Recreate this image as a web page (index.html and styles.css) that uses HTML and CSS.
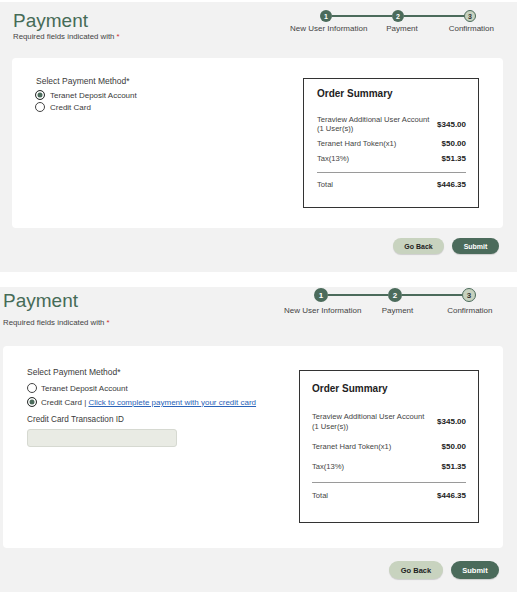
FILE: index.html
```html
<!DOCTYPE html>
<html lang="en">
<head>
<meta charset="utf-8">
<title>Payment</title>
<link rel="stylesheet" href="styles.css">
</head>
<body>
<section class="shot shot--a">
  <header class="head">
    <div class="titles">
      <h1 class="title">Payment</h1>
      <p class="req">Required fields indicated with <span class="star">*</span></p>
    </div>
    <div class="stepper">
      <div class="track">
        <span class="dot dot--done">1</span><span class="bar"></span><span class="dot dot--done">2</span><span class="bar"></span><span class="dot dot--todo">3</span>
      </div>
      <div class="labels">
        <span>New User Information</span><span>Payment</span><span>Confirmation</span>
      </div>
    </div>
  </header>
  <div class="card">
    <div class="form">
      <p class="field-label">Select Payment Method*</p>
      <div class="opt"><span class="radio radio--on"></span><span>Teranet Deposit Account</span></div>
      <div class="opt"><span class="radio"></span><span>Credit Card</span></div>
    </div>
    <div class="summary">
      <h2 class="sum-title">Order Summary</h2>
      <div class="sum-row sum-row--first"><span>Teraview Additional User Account<br>(1 User(s))</span><b>$345.00</b></div>
      <div class="sum-row"><span>Teranet Hard Token(x1)</span><b>$50.00</b></div>
      <div class="sum-row"><span>Tax(13%)</span><b>$51.35</b></div>
      <hr class="divider">
      <div class="sum-row sum-row--total"><span>Total</span><b>$446.35</b></div>
    </div>
  </div>
  <div class="actions">
    <button class="btn btn--back">Go Back</button>
    <button class="btn btn--submit">Submit</button>
  </div>
</section>

<section class="shot shot--b">
  <header class="head">
    <div class="titles">
      <h1 class="title">Payment</h1>
      <p class="req">Required fields indicated with <span class="star">*</span></p>
    </div>
    <div class="stepper">
      <div class="track">
        <span class="dot dot--done">1</span><span class="bar"></span><span class="dot dot--done">2</span><span class="bar"></span><span class="dot dot--todo">3</span>
      </div>
      <div class="labels">
        <span>New User Information</span><span>Payment</span><span>Confirmation</span>
      </div>
    </div>
  </header>
  <div class="card">
    <div class="form">
      <p class="field-label">Select Payment Method*</p>
      <div class="opt"><span class="radio"></span><span>Teranet Deposit Account</span></div>
      <div class="opt"><span class="radio radio--on"></span><span>Credit Card | <a class="link" href="#">Click to complete payment with your credit card</a></span></div>
      <p class="field-label field-label--cc">Credit Card Transaction ID</p>
      <div class="input"></div>
    </div>
    <div class="summary">
      <h2 class="sum-title">Order Summary</h2>
      <div class="sum-row sum-row--first"><span>Teraview Additional User Account<br>(1 User(s))</span><b>$345.00</b></div>
      <div class="sum-row"><span>Teranet Hard Token(x1)</span><b>$50.00</b></div>
      <div class="sum-row"><span>Tax(13%)</span><b>$51.35</b></div>
      <hr class="divider">
      <div class="sum-row sum-row--total"><span>Total</span><b>$446.35</b></div>
    </div>
  </div>
  <div class="actions">
    <button class="btn btn--back">Go Back</button>
    <button class="btn btn--submit">Submit</button>
  </div>
</section>
</body>
</html>
```
FILE: styles.css
```css
html, body {
  margin: 0;
  padding: 0;
  background: #ffffff;
}
body {
  font-family: "Liberation Sans", Arial, sans-serif;
  color: #3a3a3a;
  width: 517px;
  height: 592px;
  overflow: hidden;
}
.shot {
  background: #f2f2f2;
  display: flex;
  flex-direction: column;
  box-sizing: border-box;
}
.shot--a { margin-top: 2px; height: 270px; }
.shot--b { margin-top: 15px; height: 305px; }

/* header */
.head {
  display: flex;
  justify-content: space-between;
  align-items: flex-start;
  box-sizing: border-box;
}
.shot--a .head { height: 56px; padding: 8px 11px 0 13px; }
.shot--b .head { height: 59px; padding: 1px 11px 0 3px; }

.title {
  margin: 0;
  font-weight: normal;
  font-size: 19px;
  line-height: 22px;
  color: #466b57;
}
.shot--b .title { margin-top: 2px; }
.req {
  margin: 0;
  font-size: 7.8px;
  line-height: 10px;
  color: #444;
}
.shot--b .req { margin-top: 6px; }
.star { color: #d0312d; }

/* stepper */
.stepper { display: flex; flex-direction: column; }
.shot--a .stepper { width: 216px; }
.shot--b .stepper { width: 222px; }
.track {
  display: flex;
  align-items: center;
  padding: 0 30px;
}
.bar {
  flex: 1;
  height: 1.5px;
  background: #4b6b5b;
}
.dot {
  box-sizing: border-box;
  border-radius: 50%;
  display: flex;
  align-items: center;
  justify-content: center;
  font-weight: bold;
  flex: none;
}
.shot--a .dot { width: 12px; height: 12px; font-size: 7px; }
.shot--b .dot { width: 14px; height: 14px; font-size: 8px; }
.dot--done { background: #4b6b5b; color: #fff; }
.dot--todo { background: #c7d2bf; color: #333; border: 1.5px solid #4b6b5b; }
.labels {
  display: grid;
  grid-template-columns: repeat(3, 1fr);
  justify-items: center;
  white-space: nowrap;
  font-size: 8px;
  line-height: 10px;
  color: #444;
}
.shot--a .labels { margin-top: 2px; }
.shot--b .labels { margin-top: 4px; }

/* card */
.card {
  background: #fff;
  border-radius: 4px;
  display: flex;
  justify-content: space-between;
  align-items: flex-start;
  box-sizing: border-box;
}
.shot--a .card { margin: 0 14px 0 12px; height: 170px; padding: 20px 24px; }
.shot--b .card { margin: 0 14px 0 3px; height: 202px; padding: 24px 24px; }

.form {
  display: flex;
  flex-direction: column;
  font-size: 8px;
  color: #3a3a3a;
}
.shot--a .form { margin-top: -2px; }
.shot--b .form { margin-top: -3px; }
.field-label {
  margin: 0;
  line-height: 11px;
  font-size: 8.5px;
}
.field-label--cc { font-size: 8.2px; }
.shot--a .field-label { margin-bottom: 2px; }
.shot--b .field-label { margin-bottom: 3px; }
.shot--b .field-label--cc { margin-top: 5px; margin-bottom: 4px; }
.opt {
  display: flex;
  align-items: center;
  gap: 5px;
  white-space: nowrap;
}
.shot--a .opt { height: 12px; margin-left: -1px; }
.shot--b .opt { height: 14px; gap: 4px; }
.radio {
  box-sizing: border-box;
  width: 10px;
  height: 10px;
  border-radius: 50%;
  border: 1px solid #444;
  background: #fff;
  flex: none;
}
.radio--on {
  border-color: #333;
  background: #4b6b5b;
  box-shadow: inset 0 0 0 1.5px #fff;
}
.link {
  color: #2a63b8;
  text-decoration: underline;
  font-size: 8px;
}
.input {
  width: 150px;
  height: 18px;
  box-sizing: border-box;
  background: #e9ebe4;
  border: 1px solid #d6d9d1;
  border-radius: 3px;
}

/* summary */
.summary {
  box-sizing: border-box;
  border: 1.5px solid #333;
  flex: none;
  display: flex;
  flex-direction: column;
  font-size: 8px;
  color: #444;
}
.shot--a .summary { width: 176px; height: 130px; padding: 8.5px 12px 0 13px; }
.shot--b .summary { width: 180px; height: 153px; padding: 11.5px 12px 0 12px; }
.sum-title {
  margin: 0;
  font-size: 10px;
  line-height: 12px;
  font-weight: bold;
  color: #222;
}
.sum-row {
  display: flex;
  justify-content: space-between;
  align-items: center;
  white-space: nowrap;
}
.sum-row span { font-size: 7.6px; }
.sum-row b { color: #222; font-weight: bold; }
.shot--a .sum-row { line-height: 9px; margin-top: 6px; }
.shot--a .sum-row--first { margin-top: 15.5px; }
.shot--a .sum-row--total { margin-top: 7.5px; }
.shot--b .sum-row { line-height: 10px; margin-top: 10px; }
.shot--b .sum-row--first { margin-top: 17px; }
.shot--b .sum-row--total { margin-top: 8px; }
.divider {
  border: 0;
  border-top: 1px solid #9a9a9a;
  margin: 0;
  height: 0;
}
.shot--a .divider { margin-top: 8.5px; }
.shot--b .divider { margin-top: 10px; }

/* actions */
.actions {
  display: flex;
  justify-content: flex-end;
  gap: 8px;
  padding-right: 18px;
}
.shot--a .actions { margin-top: 10px; }
.shot--b .actions { margin-top: 13px; }
.btn {
  border: none;
  border-radius: 10px;
  font-family: "Liberation Sans", Arial, sans-serif;
  font-weight: bold;
  font-size: 7px;
  padding: 0;
  box-shadow: 0 1px 1px rgba(0,0,0,0.15);
}
.shot--a .btn { height: 16px; }
.shot--b .btn { height: 18px; font-size: 7.5px; }
.shot--a .btn--back { width: 51px; }
.shot--a .btn--submit { width: 47px; }
.shot--b .btn--back { width: 54px; }
.shot--b .btn--submit { width: 48px; }
.btn--back { background: #c8d3bf; color: #222; }
.btn--submit { background: #4b6b5b; color: #fff; }
```
